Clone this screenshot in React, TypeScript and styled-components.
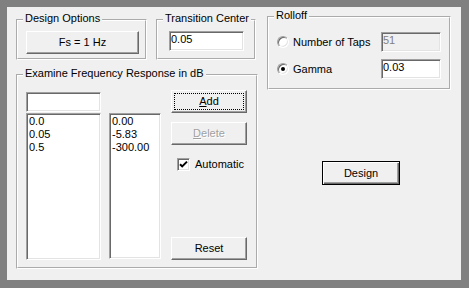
import styled, { createGlobalStyle } from "styled-components";

const GlobalStyle = createGlobalStyle`
  * { box-sizing: border-box; }
  html, body {
    margin: 0;
    padding: 0;
    background: #808080;
  }
  body {
    width: 469px;
    height: 288px;
    overflow: hidden;
    font-family: "Liberation Sans", Arial, sans-serif;
    font-size: 11px;
    color: #000;
  }
`;

const frequencies = ["0.0", "0.05", "0.5"];
const responses = ["0.00", "-5.83", "-300.00"];

export default function App() {
  return (
    <>
      <GlobalStyle />
      <Dialog>
        <LeftColumn>
          <TopRow>
            <Group $width={131}>
              <Caption>Design Options</Caption>
              <DesignBody>
                <PushButton $w={113}>Fs = 1 Hz</PushButton>
              </DesignBody>
            </Group>
            <Group $width={100}>
              <Caption>Transition Center</Caption>
              <TransitionBody>
                <EditBox $w={75}>0.05</EditBox>
              </TransitionBody>
            </Group>
          </TopRow>

          <Group $width={242}>
            <Caption>Examine Frequency Response in dB</Caption>
            <ExamineBody>
              <ListsColumn>
                <EditBox $w={75} />
                <ListsRow>
                  <ListBox $w={75} $h={147}>
                    {frequencies.map((f) => (
                      <ListItem key={f}>{f}</ListItem>
                    ))}
                  </ListBox>
                  <ListBox $w={52} $h={146}>
                    {responses.map((r) => (
                      <ListItem key={r}>{r}</ListItem>
                    ))}
                  </ListBox>
                </ListsRow>
              </ListsColumn>
              <ButtonsColumn>
                <PushButton $w={76} $focus>
                  <u>A</u>dd
                </PushButton>
                <PushButton $w={76} disabled>
                  <u>D</u>elete
                </PushButton>
                <CheckRow>
                  <CheckBox>
                    <svg width="9" height="9" viewBox="0 0 9 9">
                      <path d="M1 4.2 L3.2 6.4 L8 1.6" fill="none" stroke="#000" strokeWidth="2" />
                    </svg>
                  </CheckBox>
                  Automatic
                </CheckRow>
                <ResetSlot>
                  <PushButton $w={76}>Reset</PushButton>
                </ResetSlot>
              </ButtonsColumn>
            </ExamineBody>
          </Group>
        </LeftColumn>

        <RightColumn>
          <Group $width={184}>
            <Caption>Rolloff</Caption>
            <RolloffBody>
              <OptionRow>
                <Radio />
                <OptionLabel>Number of Taps</OptionLabel>
                <EditBox $w={60} $disabled>
                  51
                </EditBox>
              </OptionRow>
              <OptionRow>
                <Radio $checked />
                <OptionLabel>Gamma</OptionLabel>
                <EditBox $w={60}>0.03</EditBox>
              </OptionRow>
            </RolloffBody>
          </Group>
          <DesignSlot>
            <PushButton $w={78} $h={24} $default>
              Design
            </PushButton>
          </DesignSlot>
        </RightColumn>
      </Dialog>
    </>
  );
}

const Dialog = styled.div`
  margin: 7px 0 0 7px;
  width: 454px;
  height: 273px;
  display: flex;
  gap: 9px;
  padding: 3px 0 0 9px;
  background: #f0f0f0;
`;

const LeftColumn = styled.div`
  width: 242px;
  margin-top: 3px;
  display: flex;
  flex-direction: column;
  gap: 8px;
`;

const TopRow = styled.div`
  display: flex;
  gap: 9px;
`;

const RightColumn = styled.div`
  width: 184px;
  display: flex;
  flex-direction: column;
`;

const Group = styled.fieldset<{ $width: number }>`
  margin: 0;
  padding: 0;
  min-width: 0;
  width: ${(p) => p.$width}px;
  border: 2px groove #fff;
`;

const Caption = styled.legend`
  margin-left: 5px;
  padding: 0 2px 3px;
  line-height: 11px;
  white-space: nowrap;
`;

const DesignBody = styled.div`
  padding: 4px 8px;
`;

const TransitionBody = styled.div`
  padding: 4px 0 0 11px;
`;

const ExamineBody = styled.div`
  display: flex;
  gap: 10px;
  padding: 0 0 7px 8px;
`;

const ListsColumn = styled.div`
  display: flex;
  flex-direction: column;
  gap: 1px;
  padding-top: 10px;
`;

const ListsRow = styled.div`
  display: flex;
  align-items: flex-start;
  gap: 8px;
`;

const ButtonsColumn = styled.div`
  display: flex;
  flex-direction: column;
  padding-top: 8px;
  gap: 9px;
`;

const ResetSlot = styled.div`
  margin-top: auto;
`;

const RolloffBody = styled.div`
  display: flex;
  flex-direction: column;
  gap: 7px;
  padding: 8px 8px 9px 8px;
`;

const OptionRow = styled.div`
  display: flex;
  align-items: center;
  height: 20px;
`;

const OptionLabel = styled.span`
  margin-left: 4px;
  flex: 1;
  line-height: 13px;
`;

const DesignSlot = styled.div`
  margin: 71px 0 0 55px;
`;

const PushButton = styled.button<{
  $w: number;
  $h?: number;
  $default?: boolean;
  $focus?: boolean;
}>`
  position: relative;
  display: block;
  width: ${(p) => p.$w}px;
  height: ${(p) => p.$h ?? 23}px;
  padding: 0;
  font: inherit;
  line-height: 13px;
  color: #000;
  background: #f0f0f0;
  border: 1px solid;
  border-color: ${(p) =>
    p.$default ? "#000" : "#fff #696969 #696969 #fff"};
  box-shadow: ${(p) =>
    p.$default
      ? "inset 1px 1px #fff, inset -1px -1px #696969, inset -2px -2px #a0a0a0"
      : "inset -1px -1px #a0a0a0, inset 1px 1px #f0f0f0"};

  u {
    text-decoration: underline;
    text-underline-offset: 1px;
  }

  &:disabled {
    color: #a0a0a0;
    text-shadow: 1px 1px #fff;
  }

  &::after {
    content: "";
    display: ${(p) => (p.$focus ? "block" : "none")};
    position: absolute;
    inset: 2px;
    border: 1px dotted #000;
  }
`;

const EditBox = styled.div<{ $w: number; $h?: number; $disabled?: boolean }>`
  width: ${(p) => p.$w}px;
  height: ${(p) => p.$h ?? 20}px;
  padding: 1px 1px 0;
  line-height: 13px;
  white-space: nowrap;
  color: ${(p) => (p.$disabled ? "#808080" : "#000")};
  background: ${(p) => (p.$disabled ? "#f0f0f0" : "#fff")};
  border: 1px solid;
  border-color: #a0a0a0 #fff #fff #a0a0a0;
  box-shadow: inset 1px 1px #696969, inset -1px -1px #e3e3e3;
`;

const ListBox = styled.div<{ $w: number; $h: number }>`
  width: ${(p) => p.$w}px;
  height: ${(p) => p.$h}px;
  padding: 1px 2px;
  background: #fff;
  border: 1px solid;
  border-color: #a0a0a0 #fff #fff #a0a0a0;
  box-shadow: inset 1px 1px #696969, inset -1px -1px #e3e3e3;
`;

const ListItem = styled.div`
  line-height: 13px;
  white-space: nowrap;
`;

const CheckRow = styled.label`
  display: flex;
  align-items: center;
  gap: 5px;
  margin: 4px 0 0 6px;
  line-height: 13px;
`;

const CheckBox = styled.span`
  display: flex;
  align-items: center;
  justify-content: center;
  width: 13px;
  height: 13px;
  background: #fff;
  border: 1px solid;
  border-color: #a0a0a0 #fff #fff #a0a0a0;
  box-shadow: inset 1px 1px #696969, inset -1px -1px #e3e3e3;
`;

const Radio = styled.span<{ $checked?: boolean }>`
  display: flex;
  align-items: center;
  justify-content: center;
  width: 12px;
  height: 12px;
  border-radius: 50%;
  background: #fff;
  border: 1px solid;
  border-color: #a0a0a0 #fff #fff #a0a0a0;
  box-shadow: inset 1px 1px #696969, inset -1px -1px #e3e3e3;

  &::after {
    content: "";
    display: ${(p) => (p.$checked ? "block" : "none")};
    width: 4px;
    height: 4px;
    border-radius: 50%;
    background: #000;
  }
`;
